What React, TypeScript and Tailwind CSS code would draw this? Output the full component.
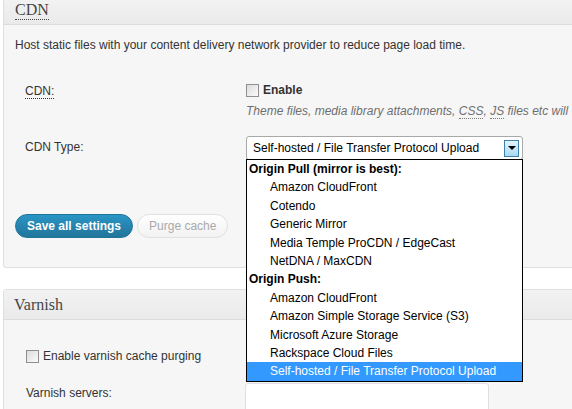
import { useState } from 'react';

const PULL = ['Amazon CloudFront', 'Cotendo', 'Generic Mirror', 'Media Temple ProCDN / EdgeCast', 'NetDNA / MaxCDN'];
const PUSH = [
  'Amazon CloudFront',
  'Amazon Simple Storage Service (S3)',
  'Microsoft Azure Storage',
  'Rackspace Cloud Files',
  'Self-hosted / File Transfer Protocol Upload',
];

const SELECTED = 'Self-hosted / File Transfer Protocol Upload';

function Checkbox() {
  return (
    <span className="inline-block w-[13px] h-[13px] border border-[#8f8f8f] bg-gradient-to-br from-[#dcdcdc] to-[#fbfbfb] shrink-0" />
  );
}

function Option({ label, active }: { label: string; active?: boolean }) {
  return (
    <div
      className={`h-[18.4px] leading-[18.4px] pl-[23px] whitespace-nowrap ${
        active ? 'bg-[#3399ff] text-white' : 'text-black'
      }`}
    >
      {label}
    </div>
  );
}

export default function App() {
  const [open] = useState(true);

  return (
    <div
      className="w-[572px] h-[409px] overflow-hidden bg-white text-[12px] text-[#333]"
      style={{ fontFamily: '"Liberation Sans", Arial, sans-serif' }}
    >
      {/* CDN panel */}
      <div className="ml-[3px] w-[620px] border-x border-b border-[#dfdfdf] rounded-b-[3px] bg-[#f6f6f6]">
        <div className="h-[25px] border-b border-[#dcdcdc] bg-gradient-to-b from-[#f2f2f2] to-[#eaeaea] pl-[11px]">
          <span
            className="inline-block text-[16px] leading-[19px] text-[#464646] border-b border-dotted border-[#464646]"
            style={{ fontFamily: '"Liberation Serif", Georgia, serif' }}
          >
            CDN
          </span>
        </div>

        <div className="pt-[12px] pl-[11px] pb-[29px]">
          <p className="leading-[16px]">
            Host static files with your content delivery network provider to reduce page load time.
          </p>

          <div className="mt-[26px] flex">
            <div className="w-[231px] shrink-0 pl-[10px] pt-[4px] leading-[16px]">
              <span className="border-b border-dotted border-[#333]">CDN:</span>
            </div>
            <div>
              <label className="flex items-center gap-[4px] h-[22px] font-bold">
                <Checkbox />
                Enable
              </label>
              <p className="mt-[2px] italic text-[#6f6f6f] leading-[16px] whitespace-nowrap">
                Theme files, media library attachments,{' '}
                <span className="border-b border-dotted border-[#777]">CSS</span>,{' '}
                <span className="border-b border-dotted border-[#777]">JS</span> files etc will
              </p>
            </div>
          </div>

          <div className="mt-[17px] flex">
            <div className="w-[231px] shrink-0 pl-[10px] pt-[3px] leading-[16px]">CDN Type:</div>
            <div className="relative">
              <div className="w-[277px] h-[24px] flex items-center justify-between bg-white border border-[#a9a9a9] rounded-[3px] pl-[6px] pr-[3px] text-black">
                <span>{SELECTED}</span>
                <span className="w-[15px] h-[17px] border border-[#3c7fb1] bg-gradient-to-b from-[#e5f4fc] to-[#a7d9f5] flex items-center justify-center">
                  <span className="w-0 h-0 border-x-[4px] border-x-transparent border-t-[4px] border-t-black" />
                </span>
              </div>
              {open && (
                <div className="absolute left-0 top-[23px] z-10 w-[277px] h-[223px] bg-white border border-black text-black">
                  <div className="h-[18.4px] leading-[18.4px] pl-[2px] font-bold">Origin Pull (mirror is best):</div>
                  {PULL.map((p) => (
                    <Option key={'pull' + p} label={p} />
                  ))}
                  <div className="h-[18.4px] leading-[18.4px] pl-[2px] font-bold">Origin Push:</div>
                  {PUSH.map((p) => (
                    <Option key={'push' + p} label={p} active={p === SELECTED} />
                  ))}
                </div>
              )}
            </div>
          </div>

          <div className="mt-[54px] flex gap-[4px]">
            <button className="h-[24px] px-[11px] rounded-full border border-[#21759b] bg-gradient-to-b from-[#2a95c5] to-[#21759b] text-white font-bold text-[12px]">
              Save all settings
            </button>
            <button className="h-[24px] px-[11px] rounded-full border border-[#e1e1e1] bg-gradient-to-b from-white to-[#f2f2f2] text-[#aaa] text-[12px]">
              Purge cache
            </button>
          </div>
        </div>
      </div>

      {/* Varnish panel */}
      <div className="mt-[21px] ml-[3px] w-[620px] border border-[#dfdfdf] rounded-t-[3px] bg-[#f6f6f6] h-[200px]">
        <div className="h-[30px] border-b border-[#dcdcdc] bg-gradient-to-b from-[#f2f2f2] to-[#eaeaea] pl-[10px] flex items-center">
          <span
            className="text-[16px] text-[#464646]"
            style={{ fontFamily: '"Liberation Serif", Georgia, serif' }}
          >
            Varnish
          </span>
        </div>
        <div className="pl-[22px] pt-[28px]">
          <label className="flex items-center gap-[4px] h-[16px]">
            <Checkbox />
            Enable varnish cache purging
          </label>
          <div className="mt-[19px] flex">
            <div className="w-[219px] shrink-0 pt-[2px] leading-[16px]">Varnish servers:</div>
            <div className="w-[244px] h-[60px] bg-white border border-[#dfdfdf] rounded-[3px]" />
          </div>
        </div>
      </div>
    </div>
  );
}
